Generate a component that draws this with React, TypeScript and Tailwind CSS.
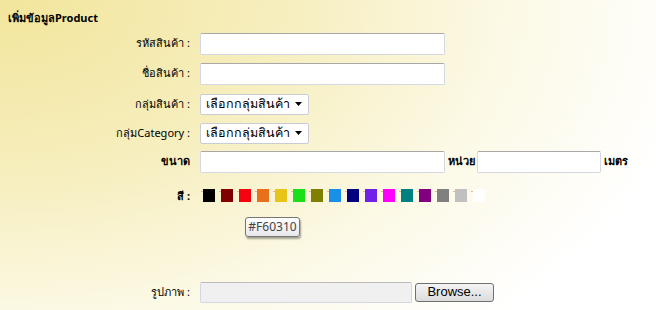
import React from "react";

const swatches = [
  "#000000",
  "#800000",
  "#f60310",
  "#e8701a",
  "#e8c418",
  "#1ae01a",
  "#808000",
  "#1890e8",
  "#000080",
  "#7020e8",
  "#ff00ff",
  "#008080",
  "#800080",
  "#808080",
  "#c0c0c0",
  "#ffffff",
];

function Label({ children }: { children: React.ReactNode }) {
  return <div className="w-[190px] shrink-0 text-right text-[11px] text-black">{children}</div>;
}

function TextBox({ w }: { w: string }) {
  return (
    <div
      className={`${w} h-[22px] rounded-[2px] border border-[#d5d8e0] border-t-[#a8a8a8] bg-white`}
    />
  );
}

function FakeSelect() {
  return (
    <div className="flex h-[21px] w-[109px] items-center justify-between rounded-[2px] border border-[#c9ccd4] bg-white pl-[5px] pr-[5px] text-[12.5px] text-black">
      <span>เลือกกลุ่มสินค้า</span>
      <svg width="8" height="5" viewBox="0 0 8 5">
        <path d="M0 0h7L3.5 4z" fill="#000" />
      </svg>
    </div>
  );
}

export default function App() {
  return (
    <div
      className="h-[310px] w-[656px] overflow-hidden bg-[radial-gradient(ellipse_120%_160%_at_0%_0%,#f2e59c_0%,#f6eebd_35%,#fcf9e6_65%,#ffffff_90%)] font-['Tahoma','Noto_Sans','DejaVu_Sans',sans-serif]"
    >
      <div className="pl-[8px] pt-[10px] text-[11px] font-bold text-black">เพิ่มข้อมูลProduct</div>

      <div className="mt-[6px] flex flex-col">
        <div className="flex items-center gap-[10px]">
          <Label>รหัสสินค้า :</Label>
          <TextBox w="w-[245px]" />
        </div>
        <div className="mt-[8px] flex items-center gap-[10px]">
          <Label>ชื่อสินค้า :</Label>
          <TextBox w="w-[245px]" />
        </div>
        <div className="mt-[9px] flex items-center gap-[10px]">
          <Label>กลุ่มสินค้า :</Label>
          <FakeSelect />
        </div>
        <div className="mt-[8px] flex items-center gap-[10px]">
          <Label>กลุ่มCategory :</Label>
          <FakeSelect />
        </div>
        <div className="mt-[7px] flex items-center">
          <div className="w-[190px] shrink-0 text-right text-[11px] font-bold text-black">ขนาด</div>
          <div className="ml-[10px]">
            <TextBox w="w-[245px]" />
          </div>
          <span className="ml-[3px] text-[11px] font-bold">หน่วย</span>
          <div className="ml-[2px]">
            <TextBox w="w-[124px]" />
          </div>
          <span className="ml-[3px] text-[11px] font-bold">เมตร</span>
        </div>

        <div className="mt-[16px] flex items-start">
          <div className="w-[190px] shrink-0 text-right text-[11px] font-bold leading-[13px]">สี :</div>
          <div className="ml-[11px] flex">
            {swatches.map((c) => (
              <div key={c} className="flex items-start">
                <span className="mt-[2px] h-px w-[2px] bg-[#e9b88a]" />
                <span
                  className="mr-[4px] h-[13px] w-[12px]"
                  style={{ backgroundColor: c }}
                />
              </div>
            ))}
          </div>
        </div>

        <div className="ml-[245px] mt-[15px] flex h-[20px] w-[55px] items-center justify-center rounded-[3px] border border-[#767676] bg-gradient-to-b from-white to-[#e8e8ec] text-[12px] text-[#444] shadow-[1px_2px_2px_rgba(0,0,0,0.35)]">
          #F60310
        </div>

        <div className="mt-[45px] flex items-center gap-[10px]">
          <Label>รูปภาพ :</Label>
          <div className="h-[21px] w-[212px] rounded-[2px] border border-[#d5d8e0] border-t-[#bcbcbc] bg-[#f0f0f0]" />
          <div className="-ml-[7px] flex h-[19px] w-[79px] items-center justify-center rounded-[3px] border border-[#707070] bg-gradient-to-b from-[#f4f4f4] to-[#dcdcdc] font-['Liberation_Sans',sans-serif] text-[13px] text-black">
            Browse...
          </div>
        </div>
      </div>
    </div>
  );
}
